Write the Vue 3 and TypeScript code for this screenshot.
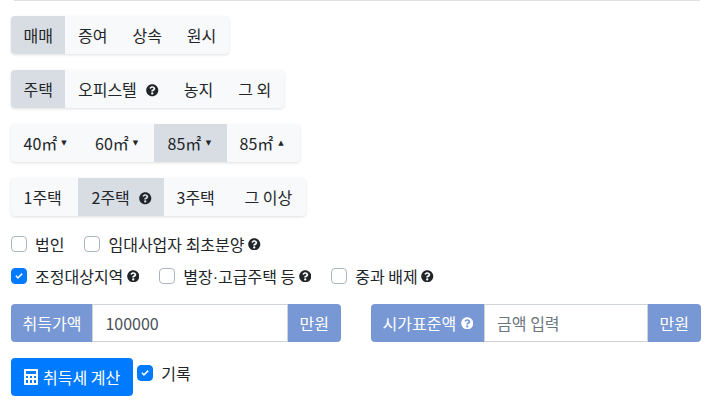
<script setup lang="ts">
const groups: { label: string; help?: boolean; caret?: string; active?: boolean; w?: number }[][] = [
  [{ label: '매매', active: true }, { label: '증여' }, { label: '상속' }, { label: '원시' }],
  [{ label: '주택', active: true }, { label: '오피스텔', help: true }, { label: '농지' }, { label: '그 외' }],
  [
    { label: '40㎡', caret: '▼', w: 71.5 },
    { label: '60㎡', caret: '▼', w: 71.5 },
    { label: '85㎡', caret: '▼', active: true, w: 73 },
    { label: '85㎡', caret: '▲', w: 72.5 },
  ],
  [
    { label: '1주택', w: 67 },
    { label: '2주택', help: true, active: true, w: 86 },
    { label: '3주택', w: 68 },
    { label: '그 이상', w: 74 },
  ],
]
const helpPath =
  'M504 256c0 136.997-111.043 248-248 248S8 392.997 8 256C8 119.083 119.043 8 256 8s248 111.083 248 248zM262.655 90c-54.497 0-89.255 22.957-116.549 63.758-3.536 5.286-2.353 12.415 2.715 16.258l34.699 26.31c5.205 3.947 12.621 3.008 16.665-2.122 17.864-22.658 30.113-35.797 57.303-35.797 20.429 0 45.698 13.148 45.698 32.958 0 14.976-12.363 22.667-32.534 33.976C247.128 238.528 216 254.941 216 296v4c0 6.627 5.373 12 12 12h56c6.627 0 12-5.373 12-12v-1.333c0-28.462 83.186-29.647 83.186-106.667 0-58.002-60.165-102-116.531-102zM256 338c-25.365 0-46 20.635-46 46 0 25.364 20.635 46 46 46s46-20.636 46-46c0-25.365-20.635-46-46-46z'
const rows = [
  [
    { label: '법인', checked: false, help: false },
    { label: '임대사업자 최초분양', checked: false, help: true },
  ],
  [
    { label: '조정대상지역', checked: true, help: true },
    { label: '별장·고급주택 등', checked: false, help: true },
    { label: '중과 배제', checked: false, help: true },
  ],
]
</script>

<template>
  <div class="page">
    <hr class="rule" />
    <div v-for="(g, i) in groups" :key="i" class="btn-group">
      <button
        v-for="(b, j) in g"
        :key="j"
        type="button"
        class="seg"
        :class="{ active: b.active }"
        :style="b.w ? { width: b.w + 'px' } : undefined"
      >
        <span>{{ b.label }}</span>
        <span v-if="b.caret" class="caret">{{ b.caret }}</span>
        <svg v-if="b.help" class="help seg-help" viewBox="0 0 512 512"><path :d="helpPath" /></svg>
      </button>
    </div>

    <div class="checks">
      <div v-for="(r, i) in rows" :key="i" class="check-row">
        <label v-for="c in r" :key="c.label" class="check">
          <span class="box" :class="{ on: c.checked }">
            <svg v-if="c.checked" viewBox="0 0 8 8"><path d="M6.6 1.300 3 4.900 1.500 3.400.6 4.300 3 6.700 7.500 2.200z" /></svg>
          </span>
          <span class="check-text">
            <template v-for="(part, k) in c.label.split('·')" :key="k"
              ><span v-if="k > 0" class="dot">·</span>{{ part }}</template
            >
          </span>
          <svg v-if="c.help" class="help" viewBox="0 0 512 512"><path :d="helpPath" /></svg>
        </label>
      </div>
    </div>

    <div class="inputs">
      <div class="input-group">
        <span class="addon left">취득가액</span>
        <input class="field" type="text" value="100000" />
        <span class="addon right">만원</span>
      </div>
      <div class="input-group">
        <span class="addon left">
          시가표준액
          <svg class="help addon-help" viewBox="0 0 512 512"><path :d="helpPath" /></svg>
        </span>
        <input class="field" type="text" placeholder="금액 입력" />
        <span class="addon right">만원</span>
      </div>
    </div>

    <div class="actions">
      <button type="button" class="primary">
        <svg class="calc" viewBox="0 0 14 16">
          <path
            fill-rule="evenodd"
            d="M1 0h12c.6 0 1 .4 1 1v14c0 .6-.4 1-1 1H1c-.6 0-1-.4-1-1V1c0-.6.4-1 1-1zM2 2v3h10V2zM2 7v2h2V7zm4 0v2h2V7zm4 0v2h2V7zM2 11v3h2v-3zm4 0v3h2v-3zm4 0v3h2v-3z"
          />
        </svg>
        취득세 계산
      </button>
      <label class="check record">
        <span class="box on">
          <svg viewBox="0 0 8 8"><path d="M6.6 1.300 3 4.900 1.500 3.400.6 4.300 3 6.700 7.500 2.200z" /></svg>
        </span>
        <span class="check-text">기록</span>
      </label>
    </div>
  </div>
</template>

<style>
html,
body {
  margin: 0;
  background: #fff;
}
</style>

<style scoped>
.page {
  box-sizing: border-box;
  width: 706px;
  height: 400px;
  padding: 0 5px 0 11px;
  overflow: hidden;
  font-family: "Noto Sans CJK KR", "Noto Sans", sans-serif;
  font-size: 16px;
  color: #212529;
}
.rule {
  height: 1px;
  margin: 0 1px 15px 3px;
  border: 0;
  background: #e0e0e0;
}
.btn-group {
  display: flex;
  width: max-content;
  height: 38px;
  margin-bottom: 16px;
  border-radius: 4px;
  background: #f8f9fa;
  box-shadow: 0 1px 3px rgba(0, 0, 0, 0.12);
}
.seg {
  display: flex;
  align-items: center;
  justify-content: space-between;
  box-sizing: border-box;
  padding: 0 12.5px;
  border: 0;
  background: transparent;
  font: inherit;
  line-height: 1;
  color: #212529;
  white-space: nowrap;
}
.seg:first-child {
  border-radius: 4px 0 0 4px;
}
.seg:last-child {
  border-radius: 0 4px 4px 0;
}
.seg.active {
  background: #d8dde4;
}
.seg.active:not(:first-child) {
  padding-left: 13.5px;
}
.caret {
  width: 12px;
  text-align: center;
  font-size: 7px;
  font-family: "DejaVu Sans", sans-serif;
}
.help {
  width: 12.5px;
  height: 12.5px;
  flex: none;
  fill: #212529;
}
.seg-help {
  margin-left: 9.5px;
  margin-top: 3px;
}
.checks {
  display: flex;
  flex-direction: column;
  gap: 8px;
}
.check-row {
  display: flex;
  gap: 20px;
  height: 24px;
  align-items: center;
}
.check {
  display: flex;
  align-items: center;
}
.box {
  box-sizing: border-box;
  display: flex;
  align-items: center;
  justify-content: center;
  width: 16px;
  height: 16px;
  border: 1px solid #adb5bd;
  border-radius: 4px;
  background: #fff;
}
.box.on {
  background: #007bff;
  border-color: #007bff;
}
.box svg {
  width: 8px;
  height: 8px;
  fill: #fff;
  stroke: #fff;
  stroke-width: 0.4;
}
.check-text {
  margin-left: 8px;
}
.check-text + .help {
  margin-left: 3.5px;
}
.dot {
  font-family: "Liberation Sans", sans-serif;
}
.inputs {
  display: grid;
  grid-template-columns: 330px 330px;
  gap: 30px;
  margin-top: 16px;
}
.input-group {
  display: flex;
  height: 38px;
}
.addon {
  display: flex;
  align-items: center;
  box-sizing: border-box;
  padding: 0 12px;
  background: #7897d5;
  color: #fff;
  white-space: nowrap;
}
.addon.left {
  padding: 0 11px 0 11.5px;
  border-radius: 4px 0 0 4px;
}
.addon.right {
  border-radius: 0 4px 4px 0;
}
.addon-help {
  margin-left: 4.5px;
  fill: #fff;
}
.field {
  flex: 1;
  min-width: 0;
  box-sizing: border-box;
  padding: 0 12px;
  border: 1px solid #ced4da;
  border-radius: 0;
  outline: 0;
  font: inherit;
  color: #495057;
}
.field::placeholder {
  color: #6c757d;
  opacity: 1;
}
.actions {
  display: flex;
  align-items: flex-start;
  margin-top: 16px;
}
.primary {
  display: flex;
  align-items: center;
  height: 38px;
  padding: 0 13px;
  border: 0;
  border-radius: 4px;
  background: #007bff;
  color: #fff;
  font: inherit;
  white-space: nowrap;
}
.calc {
  width: 14px;
  height: 16px;
  margin-right: 5px;
  fill: #fff;
}
.record {
  margin-left: 4px;
  height: 30px;
}
</style>
